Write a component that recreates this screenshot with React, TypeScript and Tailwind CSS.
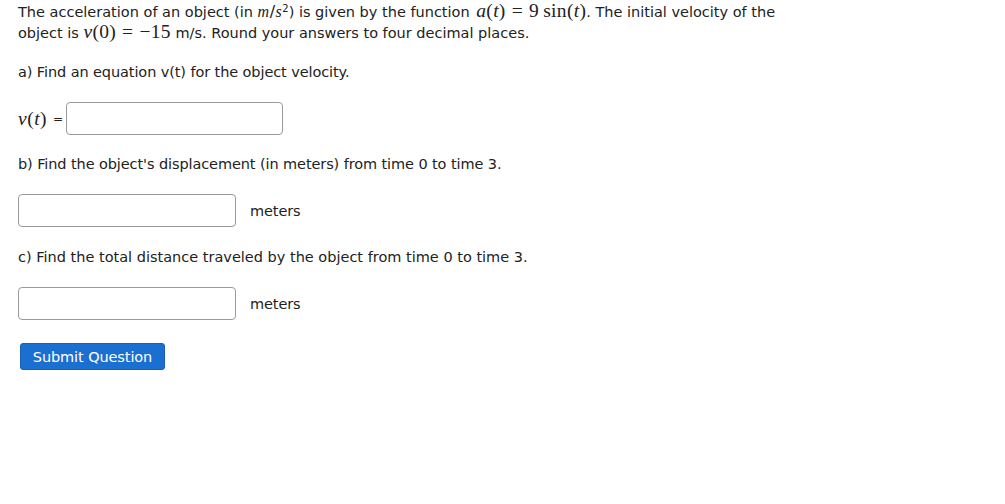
import React from "react";

const serif = '"Liberation Serif", "DejaVu Serif", serif';
const M = ({ children }: { children: React.ReactNode }) => (
  <span className="italic" style={{ fontFamily: serif }}>{children}</span>
);
const R = ({ children }: { children: React.ReactNode }) => (
  <span style={{ fontFamily: serif }}>{children}</span>
);
const Eq = () => <span className="mx-[6px]" style={{ fontFamily: serif }}>=</span>;

export default function App() {
  return (
    <div
      className="w-[1005px] h-[504px] bg-white text-[#222] pl-[18px] pt-[1px] text-[14.5px] leading-[20px] tracking-[-0.1px]"
      style={{ fontFamily: '"DejaVu Sans", Tahoma, sans-serif' }}
    >
      <p className="w-[820px] tracking-[0px]">
        The acceleration of an object (in{" "}
        <span className="text-[16px] tracking-[0.5px]">
          <M>m</M>/<M>s</M>
        </span>
        <sup className="text-[10px]">2</sup>) is given by the function{" "}
        <span className="text-[19.5px] tracking-[0.3px] ml-[2px]">
          <M>a</M><R>(</R><M>t</M><R>)</R><Eq /><R>9</R><R>&thinsp;sin(</R><M>t</M><R>)</R>
        </span>
        . The initial velocity of the
        <br />
        object is{" "}
        <span className="text-[19.5px] tracking-[0.3px]">
          <M>v</M><R>(0)</R><Eq /><R>−15</R>
        </span>{" "}
        m/s. Round your answers to four decimal places.
      </p>
      <p className="mt-[19px]">a) Find an equation v(t) for the object velocity.</p>
      <div className="mt-[20px] flex items-center">
        <span className="text-[19.5px] tracking-[0.5px]">
          <M>v</M><R>(</R><M>t</M><R>)</R>
        </span>
        <span className="text-[12px] ml-[6px]">=</span>
        <input className="w-[217px] h-[33px] border border-[#9a9a9a] rounded-[4px] ml-[3px]" />
      </div>
      <p className="mt-[19px]">b) Find the object's displacement (in meters) from time 0 to time 3.</p>
      <div className="mt-[20px] flex items-center gap-[14px]">
        <input className="w-[218px] h-[33px] border border-[#9a9a9a] rounded-[4px]" />
        <span>meters</span>
      </div>
      <p className="mt-[20px] tracking-[0px]">c) Find the total distance traveled by the object from time 0 to time 3.</p>
      <div className="mt-[20px] flex items-center gap-[14px]">
        <input className="w-[218px] h-[33px] border border-[#9a9a9a] rounded-[4px]" />
        <span>meters</span>
      </div>
      <button className="mt-[23px] ml-[2px] w-[145px] h-[27px] bg-[#1b6fd1] text-white rounded-[3px] border border-[#1560b8] text-[14.5px]">
        Submit Question
      </button>
    </div>
  );
}
